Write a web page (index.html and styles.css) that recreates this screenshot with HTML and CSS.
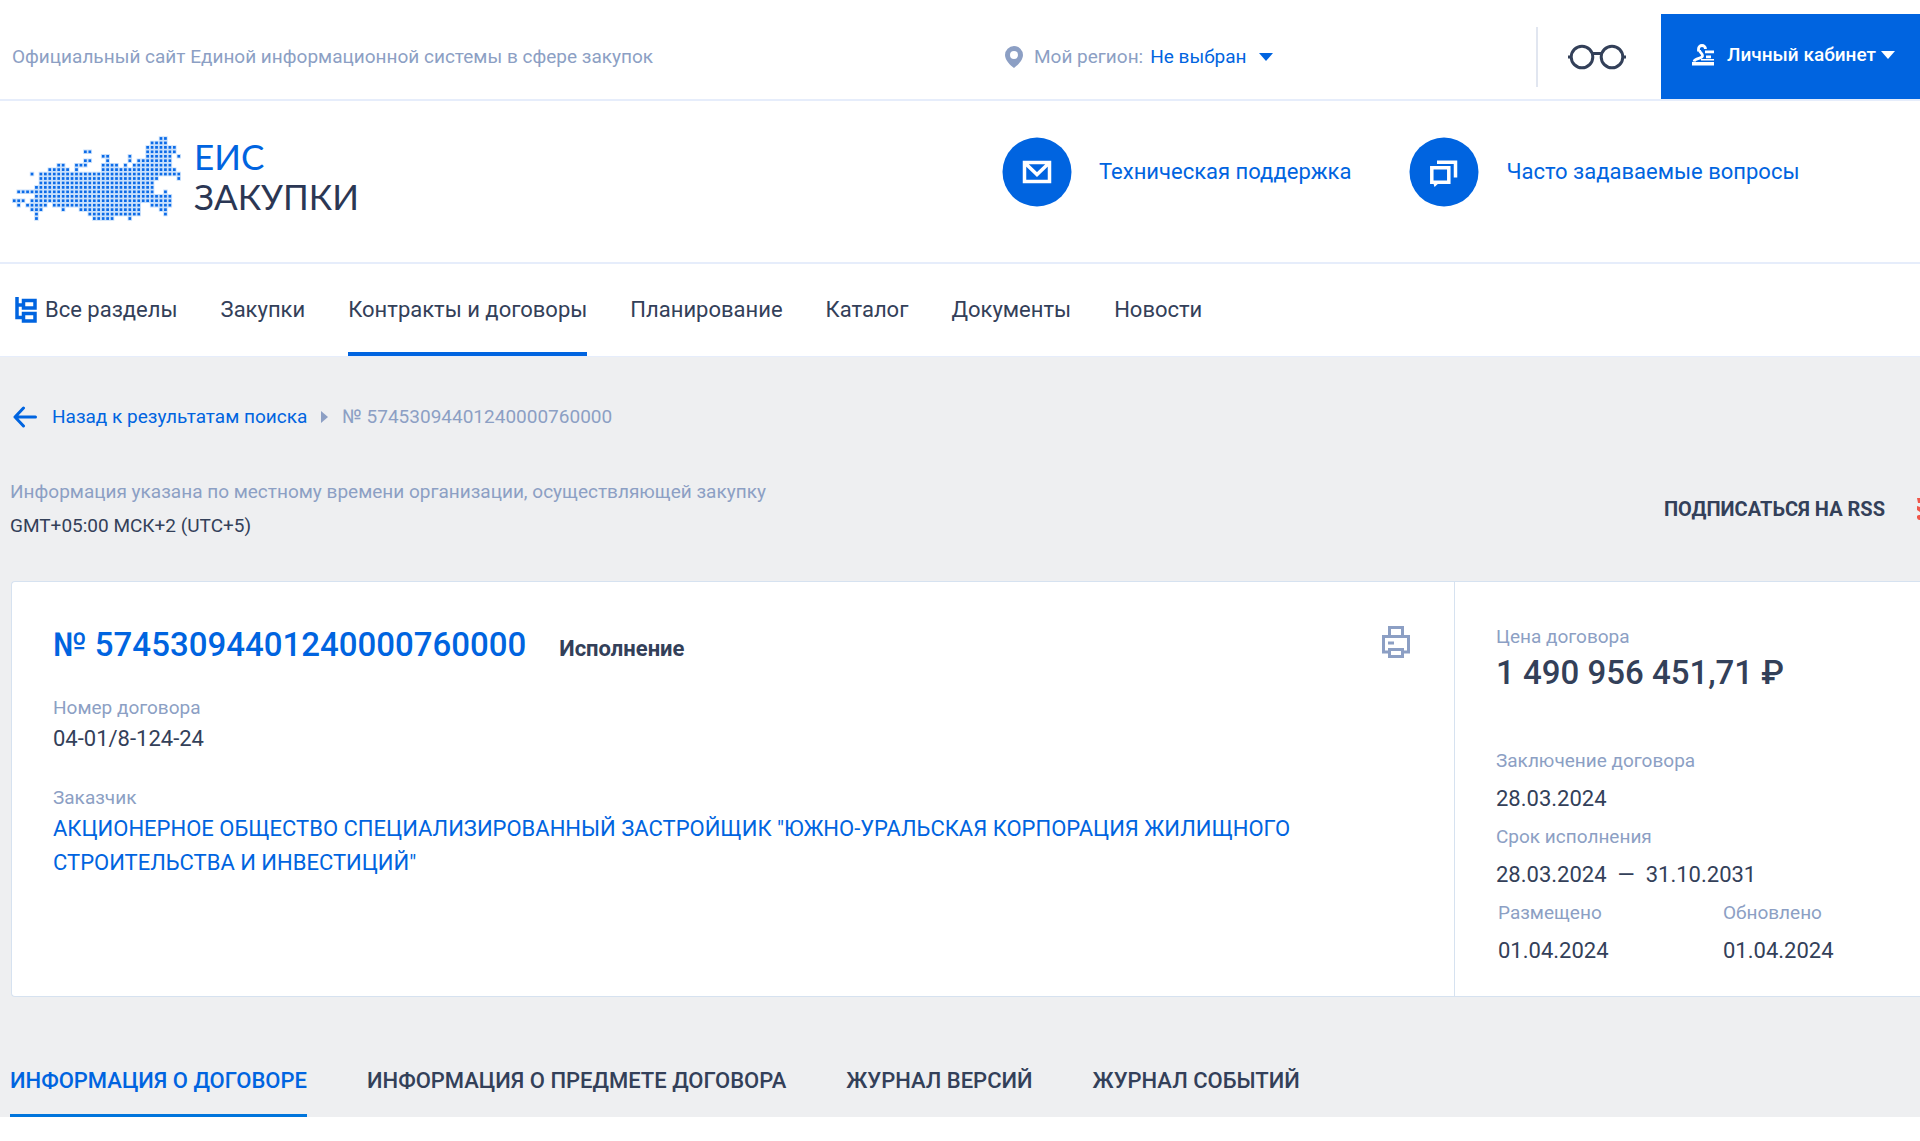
FILE: index.html
```html
<!DOCTYPE html>
<html lang="ru">
<head>
<meta charset="utf-8">
<meta name="viewport" content="width=device-width, initial-scale=1">
<title>ЕИС Закупки — сведения договора</title>
<link rel="stylesheet" href="styles.css">
</head>
<body>
<header>
  <div class="topbar split">
    <p class="site-name">Официальный сайт Единой информационной системы в сфере закупок</p>
    <div class="topbar-tools">
      <div class="region">
        <svg class="pin" viewBox="0 0 18 22" aria-hidden="true"><path fill-rule="evenodd" d="M9 0a9 9 0 0 1 9 9c0 5-5 10-9 13C5 19 0 14 0 9a9 9 0 0 1 9-9zm0 5a4 4 0 1 0 0 8 4 4 0 0 0 0-8z"/></svg>
        <span>Мой регион:</span>
        <button class="region-button" type="button">Не выбран <svg class="caret" viewBox="0 0 14 8" aria-hidden="true"><path d="M0 0h14L7 8z"/></svg></button>
      </div>
      <button class="glasses" type="button" aria-label="Версия для слабовидящих">
        <svg viewBox="0 0 60 26" aria-hidden="true"><g fill="none" stroke="#334059" stroke-width="3"><circle cx="15" cy="13" r="10.800"/><circle cx="45" cy="13" r="10.800"/><path d="M25 9.500h10M1 13h3M56 13h3"/></g></svg>
      </button>
      <button class="account" type="button">
        <svg class="account-icon" viewBox="0 0 22 22" aria-hidden="true"><path fill="none" stroke="#fff" stroke-width="2.800" d="M6.500 7.500V5a3.500 3.500 0 0 1 7 0M7.500 6c0 3 3.500 3 3 6S3 13.500 2 17.500"/><path fill="#fff" d="M0 18h22v3.500H0zM13 6.500h9v2.800h-9zM14 11.500h5v2.800h-5zM9 15h13v1.500H9z"/></svg>
        Личный кабинет
        <svg class="caret" viewBox="0 0 14 8" aria-hidden="true"><path d="M0 0h14L7 8z"/></svg>
      </button>
    </div>
  </div>

  <div class="brandbar split">
    <a class="logo" href="#">
      <svg class="logo-map" viewBox="0 0 38 19" aria-hidden="true">
        <defs><pattern id="dots" width="1" height="1" patternUnits="userSpaceOnUse"><rect width="1" height="1" fill="#c9e0fb"/><rect x=".2" y=".2" width=".6" height=".6" fill="#0b6be8"/></pattern></defs>
        <path fill="url(#dots)" d="M33 0h2v1h-2zM31 1h4v1h-4zM30 2h7v1h-7zM16 3h2v1h-2zM30 3h7v1h-7zM20 4h2v1h-2zM26 4h1v1h-1zM30 4h6v1h-6zM37 4h1v1h-1zM16 5h2v1h-2zM21 5h1v1h-1zM26 5h1v1h-1zM28 5h8v1h-8zM10 6h2v1h-2zM14 6h3v1h-3zM20 6h4v1h-4zM25 6h1v1h-1zM27 6h9v1h-9zM8 7h5v1h-5zM14 7h1v1h-1zM20 7h17v1h-17zM4 8h1v1h-1zM6 8h32v1h-32zM6 9h27v1h-27zM37 9h1v1h-1zM6 10h26v1h-26zM5 11h27v1h-27zM1 12h31v1h-31zM34 12h1v1h-1zM5 13h31v1h-31zM0 14h3v1h-3zM4 14h32v1h-32zM1 15h1v1h-1zM3 15h5v1h-5zM9 15h20v1h-20zM31 15h5v1h-5zM4 16h3v1h-3zM11 16h1v1h-1zM15 16h14v1h-14zM33 16h2v1h-2zM5 17h1v1h-1zM17 17h12v1h-12zM34 17h1v1h-1zM5 18h1v1h-1zM18 18h5v1h-5zM26 18h1v1h-1z"/>
      </svg>
      <span class="logo-text"><span class="logo-top">ЕИС</span><span>ЗАКУПКИ</span></span>
    </a>
    <div class="help-links">
      <a class="help-link" href="#">
        <svg viewBox="0 0 70 70" aria-hidden="true"><circle cx="35" cy="35" r="34.500" fill="#0064e0"/><path fill="none" stroke="#fff" stroke-width="3.500" d="M22.500 25.500h25v19h-25zM23.500 26.500l11.500 11 11.500-11"/></svg>
        Техническая поддержка
      </a>
      <a class="help-link" href="#">
        <svg viewBox="0 0 70 70" aria-hidden="true"><circle cx="35" cy="35" r="34.500" fill="#0064e0"/><path fill="none" stroke="#fff" stroke-width="3.500" d="M22.800 30.700h17v14.500h-17zM28 25.200h18.500V40.500"/><path fill="#fff" d="M24 45h7l-5.500 5z"/></svg>
        Часто задаваемые вопросы
      </a>
    </div>
  </div>

  <nav class="mainnav" aria-label="Основное меню">
    <a href="#"><svg class="sections-icon" viewBox="0 0 22 26" aria-hidden="true"><path fill="none" stroke="#0064e0" stroke-width="3.500" d="M2 0v20.500h6M2 8h6M8.500 3.500h11.500v7.500H8.500zM8.500 16.500h11.500v7.500H8.500z"/></svg>Все разделы</a>
    <a href="#">Закупки</a>
    <a class="current" href="#" aria-current="page">Контракты и договоры</a>
    <a href="#">Планирование</a>
    <a href="#">Каталог</a>
    <a href="#">Документы</a>
    <a href="#">Новости</a>
  </nav>
</header>

<main>
  <nav class="breadcrumbs" aria-label="Навигация">
    <a href="#"><svg class="back" viewBox="0 0 24 22" aria-hidden="true"><path fill="none" stroke="#0064e0" stroke-width="3" stroke-linecap="round" stroke-linejoin="round" d="M22.500 11H2M10.500 2L2 11l8.500 9"/></svg>Назад к результатам поиска</a>
    <svg class="crumb-arrow" viewBox="0 0 7 12" aria-hidden="true"><path d="M0 0l7 6-7 6z"/></svg>
    <span>№ 57453094401240000760000</span>
  </nav>

  <div class="notice">
    <div class="timezone">
      <p class="muted">Информация указана по местному времени организации, осуществляющей закупку</p>
      <p>GMT+05:00 МСК+2 (UTC+5)</p>
    </div>
    <a class="rss" href="#">ПОДПИСАТЬСЯ НА RSS <svg class="rss-icon" viewBox="0 0 3 22" aria-hidden="true"><path d="M0 0h3v5H1zM0 8l3 1v5l-3-2zM0 18a3 3 0 0 1 3-1v5a3 3 0 0 1-3-2z"/></svg></a>
  </div>

  <section class="card">
    <div class="card-main">
      <div class="card-head">
        <h1><a href="#">№ 57453094401240000760000</a></h1>
        <span class="status">Исполнение</span>
        <button class="print" type="button" aria-label="Печать">
          <svg viewBox="0 0 28 32" aria-hidden="true"><path fill="none" stroke="#8c9fc4" stroke-width="3" d="M7 26H1.500V10.500h25V26H21M7.500 10V1.500h13V10M7.500 23.500h13v7h-13zM6 17h6"/></svg>
        </button>
      </div>
      <dl class="facts">
        <dt>Номер договора</dt>
        <dd>04-01/8-124-24</dd>
        <dt>Заказчик</dt>
        <dd><a href="#">АКЦИОНЕРНОЕ ОБЩЕСТВО СПЕЦИАЛИЗИРОВАННЫЙ ЗАСТРОЙЩИК "ЮЖНО-УРАЛЬСКАЯ КОРПОРАЦИЯ ЖИЛИЩНОГО СТРОИТЕЛЬСТВА И ИНВЕСТИЦИЙ"</a></dd>
      </dl>
    </div>
    <div class="card-side">
      <dl class="price">
        <dt>Цена договора</dt>
        <dd>1 490 956 451,71 ₽</dd>
      </dl>
      <dl class="dates">
        <div class="wide"><dt>Заключение договора</dt><dd>28.03.2024</dd></div>
        <div class="wide"><dt>Срок исполнения</dt><dd class="range"><span>28.03.2024</span><span>—</span><span>31.10.2031</span></dd></div>
        <div class="half"><dt>Размещено</dt><dd>01.04.2024</dd></div>
        <div class="half"><dt>Обновлено</dt><dd>01.04.2024</dd></div>
      </dl>
    </div>
  </section>

  <nav class="tabs" aria-label="Разделы договора">
    <a class="current" href="#" aria-current="page">ИНФОРМАЦИЯ О ДОГОВОРЕ</a>
    <a href="#">ИНФОРМАЦИЯ О ПРЕДМЕТЕ ДОГОВОРА</a>
    <a href="#">ЖУРНАЛ ВЕРСИЙ</a>
    <a href="#">ЖУРНАЛ СОБЫТИЙ</a>
  </nav>
</main>
</body>
</html>
```
FILE: styles.css
```css
* { box-sizing: border-box; }

body {
  margin: 0;
  background: #fff;
  color: #334059;
  font-family: Roboto, "Liberation Sans", sans-serif;
  font-size: 19px;
  line-height: 34px;
}

p, h1, dl, dd { margin: 0; }
a { color: #0064e0; text-decoration: none; }
svg { display: block; flex: none; }
button { border: 0; padding: 0; background: none; font: inherit; cursor: pointer; }

/* header */
.split {
  display: grid;
  grid-template-columns: 1fr 918px;
  border-bottom: 2px solid #e6edfb;
  padding-left: 12px;
}
.topbar { height: 101px; padding-top: 14px; }
.site-name { align-self: center; color: #8c9fc4; }
.topbar-tools { display: flex; align-items: center; }
.region { display: flex; align-items: center; gap: 7px; padding-left: 3px; color: #8c9fc4; }
.pin { width: 18px; height: 22px; margin-right: 4px; fill: #8c9fc4; }
.region-button { display: flex; align-items: center; gap: 13px; color: #0064e0; }
.caret { width: 14px; height: 8px; fill: currentColor; }
.glasses {
  display: flex;
  justify-content: center;
  align-items: center;
  width: 125px;
  height: 60px;
  margin-left: auto;
  padding-right: 5px;
  border-left: 2px solid #e1e6f0;
}
.glasses svg { width: 60px; height: 26px; }
.account {
  display: flex;
  align-items: center;
  gap: 5px;
  width: 259px;
  align-self: stretch;
  padding: 0 0 4px 31px;
  background: #0064e0;
  color: #fff;
  font-weight: 500;
}
.account-icon { width: 22px; height: 22px; margin-right: 8px; }

.brandbar { height: 163px; }
.logo { display: flex; gap: 13px; padding-top: 35px; align-items: flex-start; }
.logo-map { width: 169px; height: 85px; }
.logo-text { color: #2b3754; font: 400 35px/40px Lato, "Open Sans", sans-serif; }
.logo-text span { display: block; }
.logo-text .logo-top { color: #0064e0; }
.help-links { display: flex; align-items: flex-start; gap: 58px; padding-top: 36px; }
.help-link { display: flex; align-items: center; gap: 27px; font-size: 22px; }
.help-link svg { width: 70px; height: 70px; }

.mainnav {
  display: flex;
  gap: 43px;
  height: 93px;
  padding: 0 0 0 15px;
  border-bottom: 1px solid #e6edfb;
  font-size: 22px;
}
.mainnav a { display: flex; align-items: center; gap: 8px; border: solid transparent; border-width: 3px 0 4px; color: #334059; }
.mainnav .current { border-bottom-color: #0064e0; }
.sections-icon { width: 22px; height: 26px; }

/* page body */
main { padding-top: 43px; background: #eeeff1; }
.breadcrumbs { display: flex; align-items: center; gap: 14px; padding-left: 13px; color: #8c9fc4; }
.breadcrumbs a { display: flex; align-items: center; gap: 15px; }
.back { width: 24px; height: 22px; }
.crumb-arrow { width: 7px; height: 12px; fill: #8c9fc4; }
.notice { display: flex; justify-content: space-between; align-items: center; padding: 41px 0 38px 10px; }
.muted { color: #8c9fc4; }
.rss { display: flex; align-items: center; gap: 32px; color: #334059; font-size: 20px; font-weight: 700; }
.rss-icon { width: 3px; height: 22px; fill: #f0564a; }

/* contract card */
.card {
  display: flex;
  min-height: 416px;
  margin-left: 11px;
  border: 1px solid #d6e2f0;
  border-right: 0;
  border-radius: 4px 0 0 4px;
  background: #fff;
}
.card-main { flex: 1; padding: 42px 44px 40px 41px; }
.card-head { display: flex; align-items: baseline; gap: 33px; line-height: 42px; }
h1 { font-size: 33px; font-weight: 500; }
.status { font-size: 22px; font-weight: 700; }
.print { align-self: flex-start; margin-left: auto; }
.print svg { width: 28px; height: 32px; margin-top: 2px; }
dt { color: #8c9fc4; }
dd { font-size: 22px; }
.facts { padding-top: 24px; }
.facts dt { line-height: 28px; }
.facts dd { margin-bottom: 28px; }
.card-side { width: 466px; padding: 38px 0 26px 41px; border-left: 1px solid #d6e2f0; }
.price dd { font-size: 33px; line-height: 38px; font-weight: 500; }
.dates { display: grid; grid-template-columns: 225px 1fr; padding-top: 50px; line-height: 38px; }
.dates .wide { grid-column: 1 / -1; }
.dates .half { padding-left: 2px; }
.range { display: flex; gap: 11px; }

.tabs { display: flex; gap: 60px; padding: 49px 0 0 10px; font-size: 22px; font-weight: 500; }
.tabs a { padding: 18px 0 16px; border-bottom: 3px solid transparent; color: #334059; }
.tabs .current { border-color: #0075dc; color: #0064e0; }
```
